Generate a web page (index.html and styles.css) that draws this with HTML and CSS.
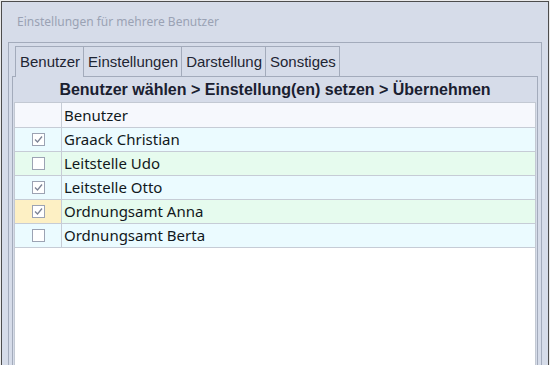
FILE: index.html
```html
<!DOCTYPE html>
<html lang="de">

<head>
    <meta charset="UTF-8">
    <meta name="viewport" content="width=device-width, initial-scale=1.0">
    <title>Einstellungen für mehrere Benutzer</title>
    <link rel="stylesheet" href="styles.css">
</head>

<body>
    <div class="window">
        <div class="title">Einstellungen für mehrere Benutzer</div>

        <div class="group">
            <div class="tabs">
                <div class="tab active">Benutzer</div>
                <div class="tab">Einstellungen</div>
                <div class="tab">Darstellung</div>
                <div class="tab">Sonstiges</div>
            </div>

            <div class="panel">
                <div class="heading">Benutzer wählen &gt; Einstellung(en) setzen &gt; Übernehmen</div>

                <div class="grid">
                    <table>
                        <tr class="head">
                            <td class="check"></td>
                            <td class="name">Benutzer</td>
                        </tr>
                        <tr class="blue">
                            <td class="check"><span class="box on"><svg viewBox="0 0 11 11"><path d="M2 5.5 L4.5 8 L9 2.5"/></svg></span></td>
                            <td class="name">Graack Christian</td>
                        </tr>
                        <tr class="green">
                            <td class="check"><span class="box"></span></td>
                            <td class="name">Leitstelle Udo</td>
                        </tr>
                        <tr class="blue">
                            <td class="check"><span class="box on"><svg viewBox="0 0 11 11"><path d="M2 5.5 L4.5 8 L9 2.5"/></svg></span></td>
                            <td class="name">Leitstelle Otto</td>
                        </tr>
                        <tr class="green">
                            <td class="check current"><span class="box on"><svg viewBox="0 0 11 11"><path d="M2 5.5 L4.5 8 L9 2.5"/></svg></span></td>
                            <td class="name">Ordnungsamt Anna</td>
                        </tr>
                        <tr class="blue">
                            <td class="check"><span class="box"></span></td>
                            <td class="name">Ordnungsamt Berta</td>
                        </tr>
                    </table>
                </div>
            </div>
        </div>
    </div>
</body>

</html>
```

FILE: styles.css
```css
body {
    margin: 0;
    background-color: #ebebeb;
    height: 100vh;
    overflow: hidden;
}

.window {
    margin: 1px 1px 0;
    height: 400px;
    border: 1px solid #4d4d4d;
    border-bottom: none;
    background-color: #d6dce9;
    display: flex;
    flex-direction: column;
}

.title {
    height: 40px;
    line-height: 40px;
    padding-left: 15px;
    font-family: "Noto Sans", sans-serif;
    font-size: 12px;
    color: #9aa2b4;
}

.group {
    flex: 1;
    margin: 0 6px;
    padding: 3px 3px 0;
    border: 1px solid #a3abbb;
    border-bottom: none;
    display: flex;
    flex-direction: column;
}

.tabs {
    display: flex;
    padding-left: 3px;
}

.tab {
    height: 29px;
    line-height: 29px;
    padding: 0 3px 0 4px;
    margin-left: -1px;
    border: 1px solid #a3abbb;
    border-bottom: none;
    font-family: "Liberation Sans", Arial, sans-serif;
    font-size: 15px;
    color: #1e2533;
}

.tab:first-child {
    margin-left: 0;
}

.tab.active {
    position: relative;
    z-index: 1;
    height: 30px;
    margin-bottom: -1px;
    background-color: #d6dce9;
}

.panel {
    flex: 1;
    padding: 0 1px;
    border: 1px solid #a3abbb;
    border-bottom: none;
    display: flex;
    flex-direction: column;
}

.heading {
    height: 25px;
    line-height: 26px;
    text-align: center;
    font-family: "Liberation Sans", Arial, sans-serif;
    font-size: 16px;
    font-weight: bold;
    color: #1a2030;
}

.grid {
    flex: 1;
    border: 1px solid #c3c9d3;
    border-bottom: none;
    background-color: #fff;
}

table {
    width: 100%;
    border-spacing: 0;
    font-family: "Noto Sans", sans-serif;
    font-size: 15px;
    color: #111820;
}

td {
    box-sizing: border-box;
    height: 24px;
    padding: 0;
    border-bottom: 1px solid #c6ccd6;
}

tr.head td {
    height: 25px;
    background-color: #f6f8fd;
}

tr.blue td {
    background-color: #ebfbff;
}

tr.green td {
    background-color: #e6fbee;
}

tr.green td.current {
    background-color: #fdf0c4;
}

td.check {
    width: 47px;
    border-right: 1px solid #c6ccd6;
    text-align: center;
    line-height: 0;
}

td.name {
    padding-left: 2px;
    line-height: 23px;
}

.box {
    display: inline-block;
    box-sizing: border-box;
    width: 13px;
    height: 13px;
    border: 1px solid #9ca3b3;
    background-color: #fff;
}

.box svg {
    width: 11px;
    height: 11px;
    fill: none;
    stroke: #7c8395;
    stroke-width: 1.3;
}
```
